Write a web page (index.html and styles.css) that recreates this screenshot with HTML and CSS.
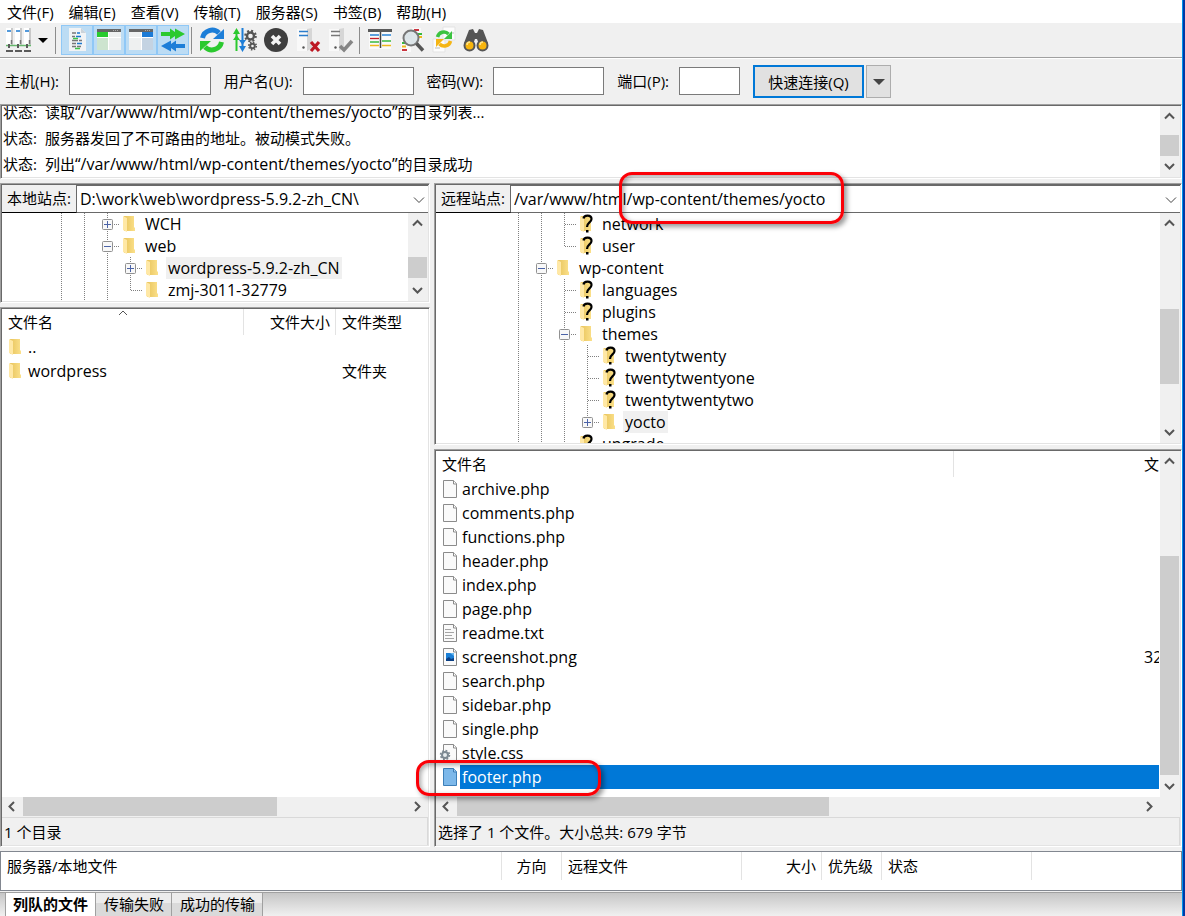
FILE: index.html
```html
<!DOCTYPE html>
<html lang="zh-CN">
<head>
<meta charset="utf-8">
<title>FileZilla</title>
<link rel="stylesheet" href="styles.css">
</head>
<body>
<svg class="defs" aria-hidden="true">
  <defs>
    <linearGradient id="gold" x1="0" x2="1"><stop offset="0" stop-color="#e8c45c"/><stop offset="1" stop-color="#fbe08a"/></linearGradient>
    <linearGradient id="server" x1="0" x2="1"><stop offset="0" stop-color="#ffffff"/><stop offset="1" stop-color="#d0d0d0"/></linearGradient>
  </defs>
  <symbol id="vline" viewBox="0 0 23 22"><path d="M11.5 0v22" class="dots"/></symbol>
  <symbol id="tee" viewBox="0 0 23 22"><path d="M11.5 0v22M12 11.5h13" class="dots"/></symbol>
  <symbol id="elbow" viewBox="0 0 23 22"><path d="M11.5 0v12M12 11.5h13" class="dots"/></symbol>
  <symbol id="minus" viewBox="0 0 23 22"><path d="M11.5 0v22M18 11.5h6" class="dots"/><rect x="6.500" y="6.500" width="10" height="10" rx="1" fill="#f8f8f8" stroke="#919191"/><path d="M8 11.500h7" stroke="#4b63a7"/></symbol>
  <symbol id="plus" viewBox="0 0 23 22"><path d="M11.5 0v22M18 11.5h6" class="dots"/><rect x="6.500" y="6.500" width="10" height="10" rx="1" fill="#f8f8f8" stroke="#919191"/><path d="M8 11.500h7M11.500 8v7" stroke="#4b63a7"/></symbol>
  <symbol id="plus-last" viewBox="0 0 23 22"><path d="M11.5 0v8M18 11.5h6" class="dots"/><rect x="6.500" y="6.500" width="10" height="10" rx="1" fill="#f8f8f8" stroke="#919191"/><path d="M8 11.500h7M11.500 8v7" stroke="#4b63a7"/></symbol>
  <symbol id="folder" viewBox="0 0 24 22"><path d="M5 3h10v11l1 1v3H5z" fill="url(#gold)"/><path d="M4 3l4 2v14l-4-2z" fill="#ffe8a6"/></symbol>
  <symbol id="unknown" viewBox="0 0 24 22"><path d="M5 3h10v15H5z" fill="url(#gold)"/><path d="M4 3l4 2v14l-4-2z" fill="#ffe8a6"/><path d="M7.500 5.500C8 1.500 15.500 1.500 15.500 6c0 3.500-4.500 3.500-4.500 8" fill="none" stroke="#000" stroke-width="2.200"/><path d="M10 17h2.500v2.500H10z"/></symbol>
  <symbol id="file" viewBox="0 0 24 24"><path d="M7.500 3.500h10l3 3v14h-13z" fill="#fafafa" stroke="#8b8b8b"/><path d="M17.500 3.500v3.500h3" fill="#fff" stroke="#8b8b8b"/></symbol>
  <symbol id="file-on" viewBox="0 0 24 24"><path d="M7.500 3.500h10l3 3v14h-13z" fill="#7cb8ea" stroke="#3c7fb8"/><path d="M17.500 3.500v3.500h3" fill="#a5d0f3" stroke="#3c7fb8"/></symbol>
  <symbol id="up" viewBox="0 0 20 20"><path d="M5 12.500l4.500-4.500 4.500 4.500" class="arrow"/></symbol>
  <symbol id="down" viewBox="0 0 20 20"><path d="M5 7l4.500 4.500 4.500-4.500" class="arrow"/></symbol>
  <symbol id="left" viewBox="0 0 20 20"><path d="M12 5l-4.500 4.500 4.500 4.500" class="arrow"/></symbol>
  <symbol id="right" viewBox="0 0 20 20"><path d="M7 5l4.500 4.500-4.500 4.500" class="arrow"/></symbol>
</svg>

<div class="window">
  <nav class="menubar" aria-label="菜单">
    <button>文件(F)</button><button>编辑(E)</button><button>查看(V)</button><button>传输(T)</button><button>服务器(S)</button><button>书签(B)</button><button>帮助(H)</button>
  </nav>

  <div class="toolbar" role="toolbar" aria-label="工具栏">
    <button class="tool" aria-label="站点管理器"><svg viewBox="0 0 28 28"><path d="M2 2h6v17H2zM11 2h6v17h-6zM20 2h6v17h-6z" fill="#fff"/><path d="M7 2h2v17H7zM16 2h2v17h-2zM25 2h2v17h-2z" fill="#c9c9c9"/><path d="M3 5h4M12 5h4M21 5h4" stroke="#1c7ad0" stroke-width="1.500"/><path d="M7.500 14v4M16.500 14v4M25.500 14v4" stroke="#777" stroke-width="1.500"/><path d="M2 19.500h25" stroke="#67b86d" stroke-width="1.500"/><path d="M5 18v4M14 18v4M23 18v4" stroke="#5a5a5a" stroke-width="2"/><path d="M2 25h25" stroke="#5a5a5a" stroke-width="2" stroke-dasharray="7 2"/></svg></button>
    <button class="caret" aria-label="站点列表"><svg viewBox="0 0 14 14"><path d="M2 5h10L7 10z"/></svg></button>
    <i class="sep"></i>
    <div class="toggles">
      <button class="tool" aria-label="消息日志"><svg viewBox="0 0 28 28"><path d="M6 2h12l5 5v18H6z" fill="#f1f3f5"/><path d="M18 2v5h5z" fill="#cbd3da"/><path d="M9 7h4M9 14.500h6M9 20.500h4" stroke="#777" stroke-width="1.500"/><path d="M14 7h3M13 10.500h5M14 17.500h5" stroke="#1d79cf" stroke-width="1.500"/><path d="M9 10.500h3M16 14.500h3M9 17.500h4M14 20.500h4" stroke="#777" stroke-width="1.500"/><path d="M10 12.500h5M12 22.500h5" stroke="#3fc24a" stroke-width="1.500"/></svg></button>
      <button class="tool" aria-label="本地目录树"><svg viewBox="0 0 28 28"><path d="M2 3h24v21H2z" fill="#eef0f0"/><path d="M2 11h11v13H2z" fill="#cde4cf"/><path d="M2 6h11v5H2z" fill="#29cb2e"/><path d="M2 3h24v3H2z" fill="#666"/><path d="M13.500 6v18M2 11.500h24" stroke="#fff"/><path d="M18 4.500h6" stroke="#aaa" stroke-dasharray="1 1"/></svg></button>
      <button class="tool" aria-label="远程目录树"><svg viewBox="0 0 28 28"><path d="M2 3h24v21H2z" fill="#eef0f0"/><path d="M15 11h11v13H15z" fill="#c4d3e2"/><path d="M15 6h11v5H15z" fill="#1c7bd6"/><path d="M2 3h24v3H2z" fill="#666"/><path d="M14.500 6v18M2 11.500h24" stroke="#fff"/><path d="M18 4.500h6" stroke="#aaa" stroke-dasharray="1 1"/></svg></button>
      <button class="tool" aria-label="传输队列"><svg viewBox="0 0 28 28"><path d="M2 6h9V2.500l5 3.500V2.500l10 5.500-10 5.500V10l-5 3.500V10H2z" fill="#2bc92f"/><path d="M26 18h-9v-3.500L12 18v-3.500L2 20l10 5.500V22l5 3.500V22h9z" fill="#1d7ed8"/></svg></button>
    </div>
    <i class="sep"></i>
    <button class="tool" aria-label="刷新"><svg viewBox="0 0 28 28"><path d="M4.500 12A9.800 9.800 0 0 1 21 7" fill="none" stroke="#1d7ed8" stroke-width="5"/><path d="M26 3v10H15z" fill="#1d7ed8"/><path d="M23.500 16A9.800 9.800 0 0 1 7 21" fill="none" stroke="#2bc92f" stroke-width="5"/><path d="M2 25V15h11z" fill="#2bc92f"/></svg></button>
    <button class="tool" aria-label="处理队列"><svg viewBox="0 0 28 28"><path d="M6.500 25V6" stroke="#2bc92f" stroke-width="2"/><path d="M3 8l3.500-6L10 8zM3 14l3.500-5 3.500 5z" fill="#2bc92f"/><path d="M12.500 2v20" stroke="#1d7ed8" stroke-width="2"/><path d="M9 20l3.500 6 3.500-6zM9 14l3.500 5 3.500-5z" fill="#1d7ed8"/><circle cx="20.500" cy="10" r="3.500" fill="none" stroke="#555" stroke-width="2.400"/><circle cx="20.500" cy="10" r="5.300" fill="none" stroke="#555" stroke-width="2" stroke-dasharray="2 2.160"/><circle cx="22.500" cy="20" r="2.300" fill="none" stroke="#555" stroke-width="2"/><circle cx="22.500" cy="20" r="3.800" fill="none" stroke="#555" stroke-width="1.500" stroke-dasharray="1.500 1.480"/></svg></button>
    <button class="tool" aria-label="取消"><svg viewBox="0 0 28 28"><circle cx="14" cy="14" r="12" fill="#3f3f3f"/><path d="M10 10l8 8M18 10l-8 8" stroke="#f4f4f4" stroke-width="3.600"/></svg></button>
    <button class="tool" aria-label="断开连接"><svg viewBox="0 0 28 28"><path d="M3 3h10v22H3z" fill="#f9f9f9"/><path d="M13 3l5-1v20l-5 3z" fill="#d6d6d6"/><path d="M5 5.500h9M5 9.500h9" stroke="#2b7dcc" stroke-width="1.500"/><circle cx="9.500" cy="21.500" r="1.200" fill="#555"/><path d="M17 16l8 9M25 16l-8 9" stroke="#bd1823" stroke-width="3.200"/></svg></button>
    <button class="tool" aria-label="重新连接"><svg viewBox="0 0 28 28"><path d="M3 3h10v22H3z" fill="#f9f9f9"/><path d="M13 3l5-1v20l-5 3z" fill="#d6d6d6"/><path d="M5 5.500h9M5 9.500h9" stroke="#777" stroke-width="1.500"/><circle cx="9.500" cy="21.500" r="1.200" fill="#555"/><path d="M14 20l4 4 8-9" fill="none" stroke="#858585" stroke-width="3.600"/></svg></button>
    <i class="sep"></i>
    <button class="tool" aria-label="过滤器"><svg viewBox="0 0 28 28"><path d="M3 5h22v18H3z" fill="#fafafa"/><path d="M2 3h24v3H2z" fill="#5a5a5a"/><path d="M4 9h9M16 9h9" stroke="#2b84d6" stroke-width="1.300"/><path d="M4 12.500h9" stroke="#c41f2b" stroke-width="1.300"/><path d="M4 16h9M16 15h9" stroke="#38b93e" stroke-width="1.300"/><path d="M4 19.500h9M16 19.500h9" stroke="#f0b81c" stroke-width="1.300"/><path d="M14.500 6v16" stroke="#444" stroke-width="1.500"/></svg></button>
    <button class="tool" aria-label="目录对比"><svg viewBox="0 0 28 28"><path d="M14 2h9v12h-9zM3 13h10v13H3z" fill="#fafafa"/><path d="M16 4h5" stroke="#c41f2b" stroke-width="1.800"/><path d="M20 8h4M4 17h3" stroke="#38b93e" stroke-width="1.800"/><path d="M4 20.500h4M20 11h4" stroke="#f0b81c" stroke-width="1.800"/><path d="M4 24h5" stroke="#c41f2b" stroke-width="1.800"/><circle cx="13" cy="12" r="7.500" fill="#d8e2e6" fill-opacity=".85" stroke="#777" stroke-width="2"/><path d="M18.500 17.500l6.500 7" stroke="#555" stroke-width="3.500"/></svg></button>
    <button class="tool" aria-label="同步浏览"><svg viewBox="0 0 28 28"><path d="M13 1h12v13H13zM3 13h12v13H3z" fill="#fcfcfc" stroke="#e3e3e3"/><path d="M21 7h3M5 22h5" stroke="#bbb"/><path d="M7.500 11a6.500 6.500 0 0 1 11-3" fill="none" stroke="#3cc340" stroke-width="3.500"/><path d="M22 5v8h-8z" fill="#3cc340"/><path d="M20.500 15a6.500 6.500 0 0 1-11 3" fill="none" stroke="#f5b514" stroke-width="3.500"/><path d="M6 21v-8h8z" fill="#f5b514"/></svg></button>
    <button class="tool" aria-label="查找文件"><svg viewBox="0 0 28 28"><path d="M7 4l4-1 2 4h2l2-4 4 1 5 13-8 4-3-8h-2l-3 8-8-4z" fill="#555"/><circle cx="7.500" cy="19.500" r="5" fill="#f7b50e" stroke="#555" stroke-width="2"/><circle cx="20.500" cy="19.500" r="5" fill="#f7b50e" stroke="#555" stroke-width="2"/><path d="M5 19a3 3 0 0 1 3-3M18 19a3 3 0 0 1 3-3" fill="none" stroke="#ffe48a" stroke-width="1.500"/></svg></button>
  </div>

  <form class="quick">
    <label for="host">主机(H):</label><input id="host" type="text">
    <label for="user">用户名(U):</label><input id="user" type="text">
    <label for="pass">密码(W):</label><input id="pass" type="password">
    <label for="port">端口(P):</label><input id="port" type="text">
    <button type="button" class="connect">快速连接(Q)</button>
    <button type="button" class="history" aria-label="历史"><svg viewBox="0 0 14 14"><path d="M1 4h12L7 10z" fill="#444"/></svg></button>
  </form>

  <section class="panel log" aria-label="消息日志">
    <div class="lines">
      <p><span>状态:</span><span>读取<b class="latin">“/var/www/html/wp-content/themes/yocto”</b>的目录列表...</span></p>
      <p><span>状态:</span><span>服务器发回了不可路由的地址。被动模式失败。</span></p>
      <p><span>状态:</span><span>列出<b class="latin">“/var/www/html/wp-content/themes/yocto”</b>的目录成功</span></p>
    </div>
    <div class="vbar bar-log"><svg><use href="#up"/></svg><i></i><svg><use href="#down"/></svg></div>
  </section>

  <main class="sites">
    <div class="side">
      <section class="panel place local">
        <div class="path"><label for="lpath">本地站点:</label><div class="combo"><select id="lpath"><option>D:\work\web\wordpress-5.9.2-zh_CN\</option></select><svg viewBox="0 0 12 8"><path d="M1 1.500l5 5 5-5"/></svg></div></div>
        <div class="scroller">
          <ul class="tree">
            <li><svg class="g"><use href="#vline"/></svg><svg class="g"><use href="#vline"/></svg><svg class="g"><use href="#plus"/></svg><svg class="ico"><use href="#folder"/></svg><span>WCH</span></li>
            <li><svg class="g"><use href="#vline"/></svg><svg class="g"><use href="#vline"/></svg><svg class="g"><use href="#minus"/></svg><svg class="ico"><use href="#folder"/></svg><span>web</span></li>
            <li><svg class="g"><use href="#vline"/></svg><svg class="g"><use href="#vline"/></svg><svg class="g"><use href="#vline"/></svg><svg class="g"><use href="#plus"/></svg><svg class="ico"><use href="#folder"/></svg><span class="on">wordpress-5.9.2-zh_CN</span></li>
            <li><svg class="g"><use href="#vline"/></svg><svg class="g"><use href="#vline"/></svg><svg class="g"><use href="#vline"/></svg><svg class="g"><use href="#elbow"/></svg><svg class="ico"><use href="#folder"/></svg><span>zmj-3011-32779</span></li>
          </ul>
          <div class="vbar bar-ltree"><svg><use href="#up"/></svg><i></i><svg><use href="#down"/></svg></div>
        </div>
      </section>
      <section class="panel files local">
        <div class="scroller">
          <div class="list">
            <table>
              <colgroup><col class="c-icon"><col class="c-lname"><col class="c-lsize"><col></colgroup>
              <thead><tr><th colspan="2">文件名<svg class="sort" viewBox="0 0 10 6"><path d="M1 5l4-4 4 4"/></svg></th><th class="num">文件大小</th><th>文件类型</th></tr></thead>
              <tbody>
                <tr><td><svg class="ico"><use href="#folder"/></svg></td><td>..</td><td></td><td></td></tr>
                <tr><td><svg class="ico"><use href="#folder"/></svg></td><td>wordpress</td><td></td><td class="kind">文件夹</td></tr>
              </tbody>
            </table>
          </div>
        </div>
        <div class="hbar bar-lfiles"><svg><use href="#left"/></svg><i></i><svg><use href="#right"/></svg></div>
        <div class="status">1 个目录</div>
      </section>
    </div>

    <div class="side">
      <section class="panel place remote">
        <div class="path"><label for="rpath">远程站点:</label><div class="combo"><select id="rpath"><option>/var/www/html/wp-content/themes/yocto</option></select><svg viewBox="0 0 12 8"><path d="M1 1.500l5 5 5-5"/></svg></div></div>
        <div class="scroller">
          <ul class="tree">
            <li><svg class="g"><use href="#vline"/></svg><svg class="g"><use href="#vline"/></svg><svg class="g"><use href="#tee"/></svg><svg class="ico"><use href="#unknown"/></svg><span>network</span></li>
            <li><svg class="g"><use href="#vline"/></svg><svg class="g"><use href="#vline"/></svg><svg class="g"><use href="#elbow"/></svg><svg class="ico"><use href="#unknown"/></svg><span>user</span></li>
            <li><svg class="g"><use href="#vline"/></svg><svg class="g"><use href="#minus"/></svg><svg class="ico"><use href="#folder"/></svg><span>wp-content</span></li>
            <li><svg class="g"><use href="#vline"/></svg><svg class="g"><use href="#vline"/></svg><svg class="g"><use href="#tee"/></svg><svg class="ico"><use href="#unknown"/></svg><span>languages</span></li>
            <li><svg class="g"><use href="#vline"/></svg><svg class="g"><use href="#vline"/></svg><svg class="g"><use href="#tee"/></svg><svg class="ico"><use href="#unknown"/></svg><span>plugins</span></li>
            <li><svg class="g"><use href="#vline"/></svg><svg class="g"><use href="#vline"/></svg><svg class="g"><use href="#minus"/></svg><svg class="ico"><use href="#folder"/></svg><span>themes</span></li>
            <li><svg class="g"><use href="#vline"/></svg><svg class="g"><use href="#vline"/></svg><svg class="g"><use href="#vline"/></svg><svg class="g"><use href="#tee"/></svg><svg class="ico"><use href="#unknown"/></svg><span>twentytwenty</span></li>
            <li><svg class="g"><use href="#vline"/></svg><svg class="g"><use href="#vline"/></svg><svg class="g"><use href="#vline"/></svg><svg class="g"><use href="#tee"/></svg><svg class="ico"><use href="#unknown"/></svg><span>twentytwentyone</span></li>
            <li><svg class="g"><use href="#vline"/></svg><svg class="g"><use href="#vline"/></svg><svg class="g"><use href="#vline"/></svg><svg class="g"><use href="#tee"/></svg><svg class="ico"><use href="#unknown"/></svg><span>twentytwentytwo</span></li>
            <li><svg class="g"><use href="#vline"/></svg><svg class="g"><use href="#vline"/></svg><svg class="g"><use href="#vline"/></svg><svg class="g"><use href="#plus-last"/></svg><svg class="ico"><use href="#folder"/></svg><span class="on">yocto</span></li>
            <li><svg class="g"><use href="#vline"/></svg><svg class="g"><use href="#vline"/></svg><svg class="g"><use href="#tee"/></svg><svg class="ico"><use href="#unknown"/></svg><span>upgrade</span></li>
          </ul>
          <div class="vbar bar-rtree"><svg><use href="#up"/></svg><i></i><svg><use href="#down"/></svg></div>
        </div>
      </section>
      <section class="panel files remote">
        <div class="scroller">
          <div class="list">
            <table>
              <colgroup><col class="c-icon"><col class="c-rname"><col></colgroup>
              <thead><tr><th colspan="2">文件名</th><th class="far">文件大小</th></tr></thead>
              <tbody>
                <tr><td><svg class="doc"><use href="#file"/></svg></td><td>archive.php</td><td></td></tr>
                <tr><td><svg class="doc"><use href="#file"/></svg></td><td>comments.php</td><td></td></tr>
                <tr><td><svg class="doc"><use href="#file"/></svg></td><td>functions.php</td><td></td></tr>
                <tr><td><svg class="doc"><use href="#file"/></svg></td><td>header.php</td><td></td></tr>
                <tr><td><svg class="doc"><use href="#file"/></svg></td><td>index.php</td><td></td></tr>
                <tr><td><svg class="doc"><use href="#file"/></svg></td><td>page.php</td><td></td></tr>
                <tr><td><svg class="doc" viewBox="0 0 24 24"><use href="#file"/><path d="M9 8.500h6M9 11.500h9M9 14.500h7M9 17.500h9" stroke="#a5a5a5"/></svg></td><td>readme.txt</td><td></td></tr>
                <tr><td><svg class="doc" viewBox="0 0 24 24"><use href="#file"/><path d="M10 8h8v8h-8z" fill="#1b7fd6"/><path d="M10 16v-2l3-2 2 2 3-1v3z" fill="#0b3f83"/><path d="M14 8h4v3z" fill="#66b6ef"/></svg></td><td>screenshot.png</td><td class="size">32</td></tr>
                <tr><td><svg class="doc"><use href="#file"/></svg></td><td>search.php</td><td></td></tr>
                <tr><td><svg class="doc"><use href="#file"/></svg></td><td>sidebar.php</td><td></td></tr>
                <tr><td><svg class="doc"><use href="#file"/></svg></td><td>single.php</td><td></td></tr>
                <tr><td><svg class="doc" viewBox="0 0 24 24"><use href="#file"/><circle cx="9" cy="14" r="3" fill="#e8edf0" stroke="#7d8a93" stroke-width="2"/><circle cx="9" cy="14" r="4.500" fill="none" stroke="#7d8a93" stroke-width="1.500" stroke-dasharray="1.800 1.730"/></svg></td><td>style.css</td><td></td></tr>
                <tr class="picked"><td><svg class="doc"><use href="#file-on"/></svg></td><td>footer.php</td><td></td></tr>
              </tbody>
            </table>
          </div>
          <div class="vbar bar-rfiles"><svg><use href="#up"/></svg><i></i><svg><use href="#down"/></svg></div>
        </div>
        <div class="hbar bar-rfiles-h"><svg><use href="#left"/></svg><i></i><svg><use href="#right"/></svg></div>
        <div class="status">选择了 1 个文件。大小总共: 679 字节</div>
        <div class="mark mark-file"></div>
      </section>
      <div class="mark mark-path"></div>
    </div>
  </main>

  <section class="queue">
    <table>
      <colgroup><col class="q-file"><col class="q-60"><col class="q-remote"><col class="q-size"><col class="q-60"><col class="q-state"><col></colgroup>
      <thead><tr><th>服务器/本地文件</th><th class="mid">方向</th><th>远程文件</th><th class="num">大小</th><th>优先级</th><th>状态</th><td></td></tr></thead>
    </table>
  </section>

  <div class="tabs" role="tablist">
    <button role="tab" aria-selected="true">列队的文件</button><button role="tab" aria-selected="false">传输失败</button><button role="tab" aria-selected="false">成功的传输</button>
  </div>
</div>
</body>
</html>
```

FILE: styles.css
```css
* { box-sizing: border-box; }
html, body { height: 100%; }
body {
  margin: 0;
  padding-right: 2px;
  overflow: hidden;
  background: #0039a6;
  color: #000;
  font: 15px/22px "Open Sans", "Noto Sans CJK SC", sans-serif;
}
button, input, select { font: inherit; color: inherit; }
button { padding: 0; border: 0; background: none; white-space: nowrap; }
svg { display: block; overflow: visible; flex: none; }
.defs { position: absolute; width: 0; height: 0; }
.dots { fill: none; stroke: #808080; stroke-dasharray: 1 1; }
.arrow { fill: none; stroke: #555; stroke-width: 2; }
.latin { font-size: 16px; font-weight: 400; }

.window {
  display: flex;
  flex-direction: column;
  height: 100%;
  border-right: 1px solid #0091ea;
  background: #f0f0f0;
}

.menubar { display: flex; gap: 15px; height: 23px; padding: 1px 7px; background: #fff; flex: none; }

.toolbar {
  display: flex;
  align-items: center;
  height: 35px;
  padding-left: 2px;
  border-bottom: 1px solid #a0a0a0;
  flex: none;
}
.tool { display: grid; place-items: center; width: 32px; height: 30px; }
.tool svg { width: 28px; height: 28px; }
.caret svg { width: 14px; height: 14px; }
.caret { padding-left: 2px; }
.sep { width: 1px; height: 27px; margin: 0 5px; background: #8c8c8c; flex: none; }
.toggles { display: flex; background: #90c8f6; }
.toggles .tool { background: #bcdcf4; border: 1px solid #90c8f6; }
.toggles + .sep { margin: 0 4px 0 2px; }
.tool + .sep { margin: 0 4px 0 3px; }

.quick {
  display: flex;
  align-items: center;
  height: 46px;
  padding-left: 5px;
  border-top: 1px solid #fff;
  flex: none;
}
.quick label { margin-bottom: 2px; white-space: nowrap; }
.quick input { height: 28px; margin: 0 13px 1px 10px; padding: 0 4px; border: 1px solid #7a7a7a; background: #fff; }
#host { width: 142px; }
#user, #pass { width: 111px; }
#port { width: 61px; }
.connect { width: 111px; height: 33px; border: 2px solid #0078d7; background: #e1e1e1; }
.history { display: grid; place-items: center; width: 25px; height: 33px; margin-left: 2px; border: 1px solid #adadad; background: #e1e1e1; }
.history svg { width: 14px; height: 14px; }

.panel {
  position: relative;
  display: flex;
  flex-direction: column;
  padding: 1px;
  border: 1px solid;
  border-color: #a0a0a0 #fff #fff #a0a0a0;
  box-shadow: inset 1px 1px #696969, inset -1px -1px #e3e3e3;
  background: #fff;
  min-width: 0;
}
.log { flex-direction: row; height: 75px; margin-bottom: 4px; flex: none; }
.lines { flex: 1; overflow: hidden; }
.lines p { display: flex; margin: 0; padding-left: 1px; line-height: 26px; white-space: nowrap; }
.lines p:first-child { margin-top: -7px; }
.lines p > span:first-child { width: 42px; }

.vbar, .hbar { display: flex; background: #f0f0f0; flex: none; }
.vbar { flex-direction: column; width: 20px; }
.hbar { height: 20px; }
.vbar svg, .hbar svg { width: 20px; height: 20px; }
.vbar i, .hbar i { background: #cdcdcd; }
.vbar::before, .vbar::after, .hbar::before, .hbar::after { content: ""; order: 1; }
.vbar svg:first-child, .hbar svg:first-child { order: 0; }
.vbar i, .hbar i { order: 2; }
.vbar::after, .hbar::after { order: 3; }
.vbar svg:last-child, .hbar svg:last-child { order: 4; }
.vbar i { margin-right: 1px; }
.hbar i { margin-bottom: 1px; }
.bar-log::before { flex: 9; } .bar-log i { flex: 21; } .bar-log::after { flex: 1; }
.bar-ltree::before { flex: 24; } .bar-ltree i { flex: 21; } .bar-ltree::after { flex: 3; }
.bar-rtree::before { flex: 76; } .bar-rtree i { flex: 75; } .bar-rtree::after { flex: 39; }
.bar-rfiles::before { flex: 85; } .bar-rfiles i { flex: 219; } .bar-rfiles::after { flex: 2; }
.bar-lfiles::before { flex: 1; } .bar-lfiles i { flex: 254; } .bar-lfiles::after { flex: 131; }
.bar-rfiles-h::before { flex: 1; } .bar-rfiles-h i { flex: 372; } .bar-rfiles-h::after { flex: 311; }
.bar-rfiles-h { padding-right: 20px; }

.sites { display: grid; grid-template-columns: 430fr 748fr; column-gap: 4px; flex: 1; min-height: 0; }
.side { position: relative; display: flex; flex-direction: column; gap: 4px; min-width: 0; min-height: 0; }
.place { flex: none; }
.place.local { height: 120px; }
.place.remote { height: 262px; }
.files { flex: 1; min-height: 0; }
.scroller { display: flex; flex: 1; min-height: 0; }

.path { display: flex; height: 28px; flex: none; }
.path label { width: 75px; padding-left: 5px; line-height: 27px; background: #f0f0f0; border-right: 1px solid #696969; border-bottom: 1px solid #000; white-space: nowrap; }
.combo { position: relative; flex: 1; border-top: 1px solid #696969; border-bottom: 1px solid #696969; }
.combo select { display: block; width: 100%; height: 26px; padding: 0 24px 0 3px; border: 0; appearance: none; background: #fff; font-size: 16px; }
.combo svg { position: absolute; right: 3px; top: 10px; width: 12px; height: 8px; fill: none; stroke: #444; pointer-events: none; }

.tree { flex: 1; margin: 0; padding: 0; list-style: none; overflow: hidden; font-size: 16px; }
.local .tree { padding-left: 48px; }
.remote .tree { padding-left: 71px; }
.tree li { display: flex; height: 22px; white-space: nowrap; }
.tree span { padding: 0 2px; line-height: 22px; }
.tree .on { background: #f0f0f0; }
.g { width: 23px; height: 22px; }
.ico { width: 24px; height: 22px; }
.doc { width: 24px; height: 24px; }

table { width: 100%; border-collapse: separate; border-spacing: 0; table-layout: fixed; }
th, td { padding: 0; text-align: left; font-weight: 400; white-space: nowrap; overflow: hidden; }
th { position: relative; height: 26px; padding-left: 6px; border-right: 1px solid #e3e3e3; }
th:last-child { border-right: 0; }
th.num { text-align: right; padding-right: 5px; }
.list { flex: 1; min-width: 0; overflow: hidden; }
.list td { height: 24px; font-size: 16px; line-height: 24px; }
.list td:nth-child(2) { padding-left: 2px; }
.list td.kind { padding-left: 6px; font-size: 15px; }
.list th.far, .list td.size { padding-left: 190px; text-overflow: clip; }
.remote .list { margin-right: 1px; }
.local .list .ico { margin-left: 3px; }
.c-icon { width: 24px; }
.c-lname { width: 218px; }
.c-lsize { width: 92px; }
.c-rname { width: 494px; }
.sort { position: absolute; left: 48%; top: 1px; width: 10px; height: 6px; fill: none; stroke: #555; }
.picked td + td { background: #0078d7; color: #fff; }
.status { height: 28px; padding-left: 2px; line-height: 28px; background: #f0f0f0; border-top: 1px solid #d9d9d9; border-right: 1px solid #d9d9d9; flex: none; }

.mark { position: absolute; z-index: 2; border: 3px solid #fb0007; border-radius: 13px; box-shadow: 3px 3px 5px rgba(0, 0, 0, .4), inset 2px 2px 5px rgba(0, 0, 0, .35); pointer-events: none; }
.mark-path { left: 185px; top: -11px; width: 225px; height: 52px; }
.mark-file { left: -19px; bottom: 50px; width: 185px; height: 36px; }

.queue { height: 40px; margin-top: 4px; border: 1px solid #828790; background: #fff; flex: none; }
.queue th, .queue th:last-of-type { height: 28px; border-right: 1px solid #e3e3e3; }
.queue th.mid { text-align: center; padding: 0; }
.q-file { width: 501px; }
.q-60 { width: 60px; }
.q-remote { width: 180px; }
.q-size { width: 80px; }
.q-state { width: 150px; }

.tabs { display: flex; height: 24px; margin-top: 1px; padding-left: 5px; border-top: 1px solid #a0a0a0; background: linear-gradient(#c6c6c6, #f0f0f0); flex: none; }
.tabs button { padding: 0 7px 3px 8px; border-right: 1px solid #a0a0a0; background: linear-gradient(#ececec 45%, #dadada 45%); }
.tabs button[aria-selected="true"] { padding-left: 7px; border-left: 1px solid #a0a0a0; background: #fff; font-weight: 700; }
```
